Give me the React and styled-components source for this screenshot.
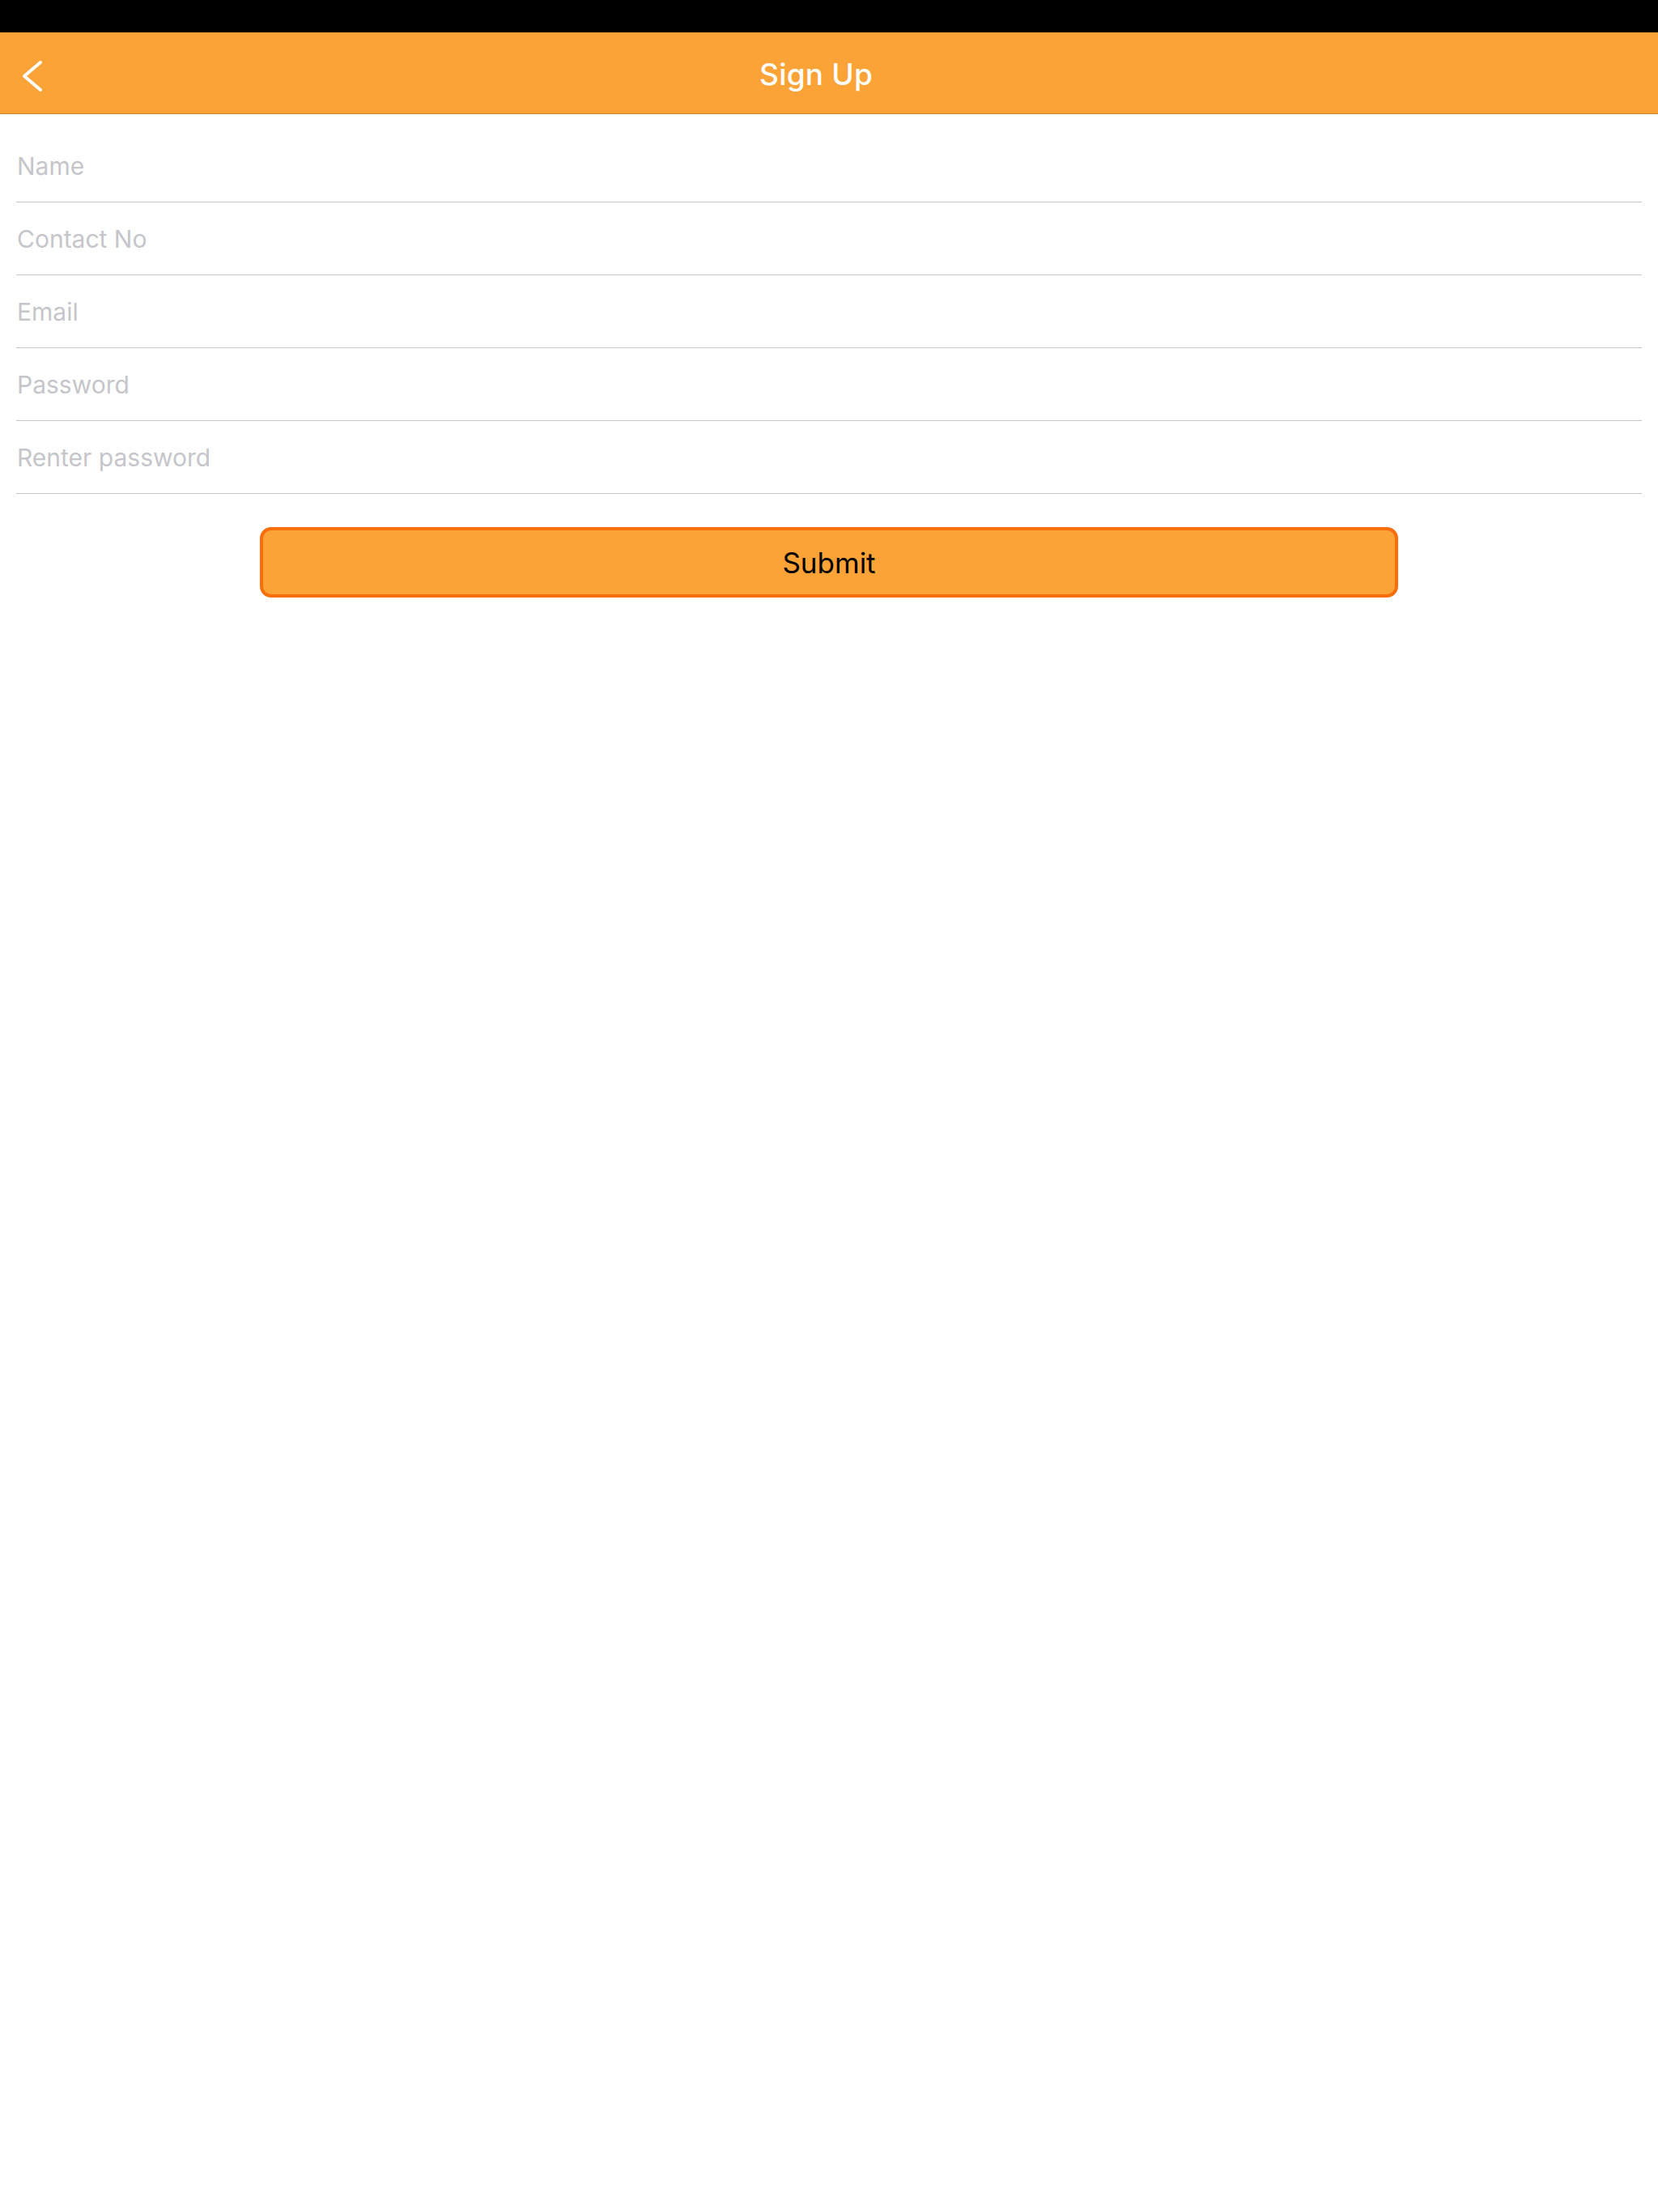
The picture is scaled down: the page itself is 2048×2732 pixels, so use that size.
import React from "react";
import styled, { createGlobalStyle } from "styled-components";

const GlobalStyle = createGlobalStyle`
  html, body {
    margin: 0;
    padding: 0;
    background: #ffffff;
    font-family: Inter, "Noto Sans", "Liberation Sans", sans-serif;
  }
  * { box-sizing: border-box; }
`;

const Page = styled.div`
  width: 2048px;
  min-height: 2732px;
  background: #ffffff;
  display: flex;
  flex-direction: column;
`;

const StatusBar = styled.div`
  height: 40px;
  background: #000000;
`;

const NavBar = styled.header`
  height: 101px;
  background: #fba336;
  border-bottom: 1px solid #c7802d;
  display: grid;
  grid-template-columns: 140px 1fr 140px;
  align-items: center;
`;

const BackButton = styled.button`
  border: none;
  background: transparent;
  padding: 8px 0 0 26px;
  height: 100%;
  display: flex;
  align-items: center;
  cursor: pointer;
`;

const Title = styled.h1`
  margin: 0;
  padding-top: 3px;
  text-align: center;
  color: #ffffff;
  font-size: 37px;
  font-weight: 500;
  letter-spacing: 0.2px;
  transform: translateX(-16px);
`;

const Form = styled.form`
  display: flex;
  flex-direction: column;
  padding: 19px 20px 0;
`;

const Field = styled.input`
  height: 90px;
  border: none;
  border-bottom: 1px solid #c8c8cb;
  padding: 0 0 0 1px;
  font-family: Inter, "Noto Sans", sans-serif;
  font-size: 30px;
  color: #222;
  outline: none;
  background: transparent;
  &::placeholder {
    color: #c5c5ca;
  }
`;

const SubmitRow = styled.div`
  display: flex;
  justify-content: center;
  padding-top: 41px;
`;

const SubmitButton = styled.button`
  width: 1406px;
  height: 87px;
  background: #fba336;
  border: 4px solid #f76e0b;
  border-radius: 14px;
  font-family: Inter, "Noto Sans", sans-serif;
  font-size: 35px;
  font-weight: 400;
  color: #000000;
  cursor: pointer;
`;

const fields = [
  { placeholder: "Name", type: "text" },
  { placeholder: "Contact No", type: "tel" },
  { placeholder: "Email", type: "email" },
  { placeholder: "Password", type: "password" },
  { placeholder: "Renter password", type: "password" },
];

export default function App() {
  return (
    <Page>
      <GlobalStyle />
      <StatusBar />
      <NavBar>
        <BackButton aria-label="Back" type="button">
          <svg width="30" height="40" viewBox="0 0 30 40" fill="none">
            <path
              d="M24 3 L4 20 L24 37"
              stroke="#ffffff"
              strokeWidth="4"
              strokeLinecap="round"
              strokeLinejoin="round"
            />
          </svg>
        </BackButton>
        <Title>Sign Up</Title>
        <div />
      </NavBar>
      <Form onSubmit={(e) => e.preventDefault()}>
        {fields.map((f) => (
          <Field key={f.placeholder} type={f.type} placeholder={f.placeholder} />
        ))}
      </Form>
      <SubmitRow>
        <SubmitButton type="button">Submit</SubmitButton>
      </SubmitRow>
    </Page>
  );
}
